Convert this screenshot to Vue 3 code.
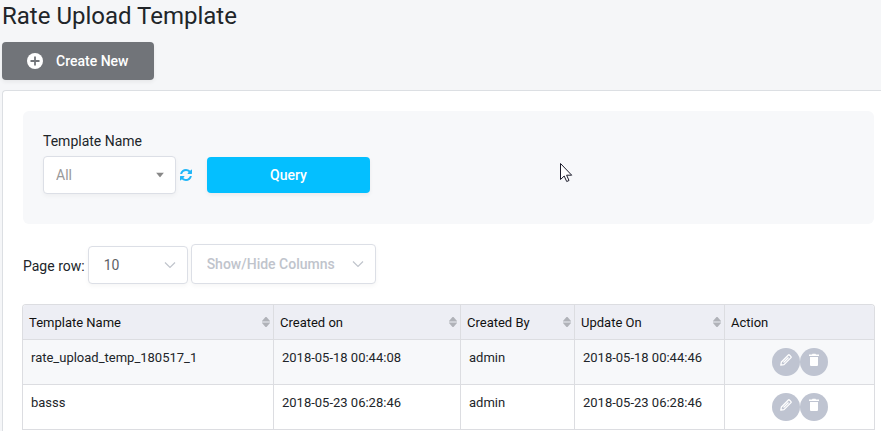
<template>
  <main class="page">
    <h1 class="page-title">Rate Upload Template</h1>
    <button type="button" class="btn btn-create">
      <svg class="icon-plus" viewBox="0 0 16 16" aria-hidden="true">
        <circle cx="8" cy="8" r="8" fill="#fff" />
        <path d="M8 3.500v9M3.500 8h9" stroke="#717479" stroke-width="1.800" />
      </svg>
      <span>Create New</span>
    </button>

    <section class="card">
      <form class="filter" @submit.prevent>
        <label class="filter-label" for="template-name">Template Name</label>
        <div class="filter-row">
          <div class="select select-template">
            <select id="template-name" v-model="templateName">
              <option>All</option>
            </select>
            <svg class="caret" width="8" height="5" viewBox="0 0 8 5" aria-hidden="true">
              <path d="M0 0h8L4 5z" fill="#888" />
            </svg>
          </div>
          <button type="button" class="btn-refresh" aria-label="Refresh">
            <svg width="12" height="12" viewBox="0 0 1536 1536" aria-hidden="true">
              <path
                fill="#1fb6f8"
                d="M1511 928q0 5-1 7-64 268-268 434.500T764 1536q-146 0-282.500-55T238 1324l-129 129q-19 19-45 19t-45-19-19-45V960q0-26 19-45t45-19h448q26 0 45 19t19 45-19 45l-137 137q71 66 161 102t187 36q134 0 250-65t186-179q11-17 53-117 8-23 30-23h192q13 0 22.500 9.500t9.500 22.500zM1536 128v448q0 26-19 45t-45 19h-448q-26 0-45-19t-19-45 19-45l138-138Q969 256 768 256q-134 0-250 65T332 500q-11 17-53 117-8 23-30 23H50q-13 0-22.500-9.500T18 608v-7q65-268 270-434.500T768 0q146 0 284 55.500T1297 212l130-129q19-19 45-19t45 19 19 45z"
              />
            </svg>
          </button>
          <button type="submit" class="btn btn-query">Query</button>
        </div>
      </form>

      <div class="toolbar">
        <label class="toolbar-label" for="page-row">Page row:</label>
        <div class="select select-rows">
          <select id="page-row" v-model="pageRow">
            <option>10</option>
          </select>
          <svg class="caret" width="12" height="7" viewBox="0 0 12 7" aria-hidden="true">
            <path d="M1 1l5 5 5-5" fill="none" stroke="#c0c4cc" stroke-width="1.200" />
          </svg>
        </div>
        <div class="select select-columns">
          <select v-model="columnFilter" aria-label="Show/Hide Columns">
            <option value="">Show/Hide Columns</option>
          </select>
          <svg class="caret" width="12" height="7" viewBox="0 0 12 7" aria-hidden="true">
            <path d="M1 1l5 5 5-5" fill="none" stroke="#c0c4cc" stroke-width="1.200" />
          </svg>
        </div>
      </div>

      <table class="table">
        <thead>
          <tr>
            <th v-for="col in columns" :key="col.key" :class="`col-${col.key}`">
              <div class="th-inner">
                <span>{{ col.label }}</span>
                <svg v-if="col.sortable" width="8" height="10" viewBox="0 0 8 10" aria-hidden="true">
                  <path d="M0 4.500V4L3.500 0h1L8 4v.5zM0 5.500V6l3.500 4h1L8 6v-.5z" fill="#b0b2b8" />
                </svg>
              </div>
            </th>
          </tr>
        </thead>
        <tbody>
          <tr v-for="row in rows" :key="row.name">
            <td>{{ row.name }}</td>
            <td>{{ row.createdOn }}</td>
            <td>{{ row.createdBy }}</td>
            <td>{{ row.updateOn }}</td>
            <td>
              <div class="actions">
                <button type="button" class="btn-round" aria-label="Edit">
                  <svg width="14" height="14" viewBox="0 0 14 14" aria-hidden="true">
                    <path
                      d="M1.800 12.200l.6-3.200 7-7q.5-.5 1 0l1.600 1.600q.5.5 0 1l-7 7zM4.500 9.500l5-5"
                      fill="none"
                      stroke="#fff"
                      stroke-width="1.300"
                      stroke-linejoin="round"
                    />
                  </svg>
                </button>
                <button type="button" class="btn-round" aria-label="Delete">
                  <svg width="14" height="14" viewBox="0 0 14 14" aria-hidden="true">
                    <path d="M2 1.500h3l.5-.8h3l.5.8h3V3H2zM3 4h8v8q0 1-1 1H4q-1 0-1-1z" fill="#fff" />
                  </svg>
                </button>
              </div>
            </td>
          </tr>
        </tbody>
      </table>
    </section>

    <svg class="pointer" width="13" height="20" viewBox="0 0 13 20" aria-hidden="true">
      <path
        d="M.5.500v16l3.700-3.500 2.500 5.500 2.300-1-2.400-5.300h5.100z"
        fill="#fff"
        stroke="#1c1c2b"
      />
    </svg>
  </main>
</template>

<script setup>
import { ref } from 'vue'

const templateName = ref('All')
const pageRow = ref('10')
const columnFilter = ref('')

const columns = [
  { key: 'name', label: 'Template Name', sortable: true },
  { key: 'created', label: 'Created on', sortable: true },
  { key: 'author', label: 'Created By', sortable: true },
  { key: 'update', label: 'Update On', sortable: true },
  { key: 'action', label: 'Action', sortable: false }
]

const rows = [
  {
    name: 'rate_upload_temp_180517_1',
    createdOn: '2018-05-18 00:44:08',
    createdBy: 'admin',
    updateOn: '2018-05-18 00:44:46'
  },
  {
    name: 'basss',
    createdOn: '2018-05-23 06:28:46',
    createdBy: 'admin',
    updateOn: '2018-05-23 06:28:46'
  }
]
</script>

<style>
body {
  margin: 0;
  background: #f5f6f8;
}
</style>

<style scoped>
.page {
  position: relative;
  box-sizing: border-box;
  display: flex;
  flex-direction: column;
  min-height: 100vh;
  padding-left: 2px;
  font-family: Roboto, 'Liberation Sans', sans-serif;
  font-size: 14px;
  color: #212529;
}

.page *,
.page *::before {
  box-sizing: border-box;
}

button,
select {
  font: inherit;
  cursor: pointer;
}

.page-title {
  margin: 0;
  font-size: 24px;
  line-height: 32px;
  font-weight: 400;
}

.btn {
  border: none;
  border-radius: 4px;
  color: #fff;
  font-weight: 500;
  box-shadow: 0 2px 4px rgba(0, 0, 0, 0.06);
}

.btn-create {
  display: flex;
  align-items: center;
  align-self: flex-start;
  gap: 13px;
  height: 38px;
  margin-top: 10px;
  padding: 0 26px 0 25px;
  background: #717479;
}

.icon-plus {
  width: 16px;
  height: 16px;
}

.card {
  flex: 1;
  margin-top: 10px;
  padding: 20px 7px 0 20px;
  background: #fff;
  border: 1px solid #dcdfe3;
  border-width: 1px 0 0 1px;
  border-top-left-radius: 4px;
}

.filter {
  padding: 20px 20px 30px;
  background: #f7f8fa;
  border-radius: 6px;
}

.filter-label {
  display: block;
  height: 25px;
  line-height: 20px;
}

.filter-row {
  display: flex;
  align-items: center;
}

.select {
  position: relative;
}

.select select {
  display: block;
  width: 100%;
  height: 38px;
  appearance: none;
  background: #fff;
  border: 1px solid #dcdfe6;
  border-radius: 4px;
  padding: 0 15px;
  color: #606266;
  box-shadow: 0 2px 4px rgba(0, 0, 0, 0.04);
}

.caret {
  position: absolute;
  top: 50%;
  right: 12px;
  transform: translateY(-50%);
  pointer-events: none;
}

.select-template {
  width: 133px;
}

.select-template select {
  padding: 0 12px;
  color: #999;
}

.btn-refresh {
  display: flex;
  margin: 0 15px 0 4px;
  padding: 0;
  border: none;
  background: none;
}

.btn-query {
  width: 163px;
  height: 36px;
  background: #04bfff;
}

.toolbar {
  display: flex;
  align-items: flex-end;
  gap: 3px;
  margin-top: 20px;
}

.toolbar-label {
  line-height: 36px;
}

.select-rows {
  width: 100px;
}

.select-columns {
  width: 185px;
}

.select-columns select {
  height: 40px;
  color: #c0c4cc;
  font-weight: 500;
}

/* the table border sits just outside the filter panel edges */
.table {
  width: calc(100% + 2px);
  margin: 20px -1px 0;
  table-layout: fixed;
  border-collapse: separate;
  border-spacing: 0;
  border: 1px solid #dcdde1;
  border-bottom: none;
  border-radius: 4px 4px 0 0;
  overflow: hidden;
  font-size: 13px;
}

.table th,
.table td {
  border-right: 1px solid #dcdde1;
  border-bottom: 1px solid #dcdde1;
  text-align: left;
}

.table th:last-child,
.table td:last-child {
  border-right: none;
}

.table th {
  height: 35px;
  padding: 0 3px 0 6px;
  background: #edeef4;
  color: #111;
  font-weight: 400;
}

.th-inner {
  display: flex;
  align-items: center;
  justify-content: space-between;
}

.table td {
  height: 45px;
  padding: 8px 8px 0;
  line-height: 20px;
  vertical-align: top;
}

.table tbody tr:nth-child(odd) {
  background: #f7f8fa;
}

.col-created {
  width: 187px;
}

.col-author {
  width: 114px;
}

.col-update {
  width: 150px;
}

.col-action {
  width: 149px;
}

.actions {
  display: flex;
  justify-content: center;
}

.btn-round {
  display: flex;
  align-items: flex-start;
  justify-content: center;
  width: 28px;
  height: 28px;
  padding: 5px 0 0;
  border: none;
  border-radius: 50%;
  background: #bfc4d1;
}

/* mouse pointer floating above the filter panel */
.pointer {
  position: absolute;
  top: 163px;
  left: 560px;
  pointer-events: none;
}
</style>
